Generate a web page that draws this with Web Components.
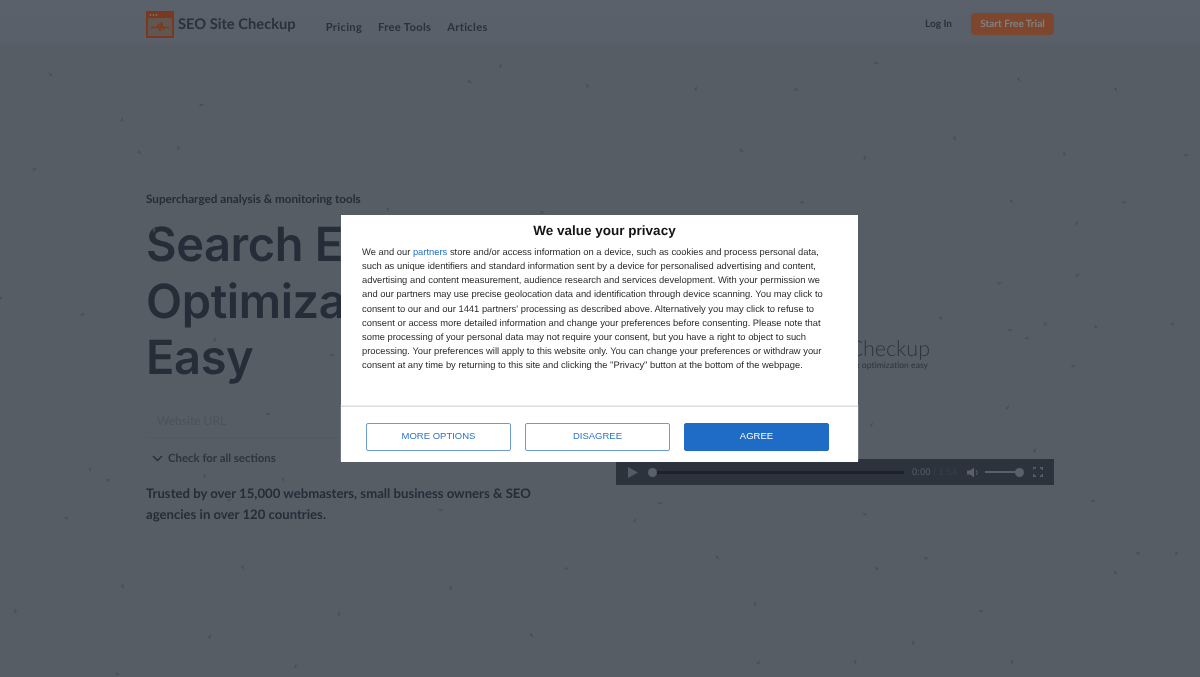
<!DOCTYPE html>
<html lang="en">
<head>
<meta charset="utf-8">
<title>SEO Site Checkup</title>
<style>
html, body {
  margin: 0;
  height: 100%;
  overflow: hidden;
  background: #acbaca;
  text-rendering: geometricPrecision;
}
</style>
</head>
<body>
<speck-field></speck-field>
<site-nav></site-nav>
<hero-section>
  <hero-copy slot="copy"></hero-copy>
  <video-player slot="media"></video-player>
</hero-section>
<consent-dialog></consent-dialog>

<template id="navTemplate">
<style>
:host {
  display: block;
  height: 48px;
  background: linear-gradient(#b5c2d6, #b3c0d3 85%, #acbaca);
  font-family: Lato, "Liberation Sans", sans-serif;
  color: #55627a;
  filter: blur(.35px);
}
.inner {
  box-sizing: border-box;
  width: 908px;
  height: 100%;
  margin: 0 auto;
  display: flex;
  align-items: center;
}
.brand {
  display: flex;
  align-items: center;
  gap: 4px;
  font-size: 14.7px;
  font-weight: 700;
  margin-right: 30px;
}
.brand svg { display: block; }
nav {
  display: flex;
  gap: 16px;
  font-size: 11.2px;
  font-weight: 700;
  letter-spacing: .3px;
  padding-top: 6px;
}
.right {
  margin-left: auto;
  display: flex;
  align-items: center;
  gap: 19px;
  font-size: 10px;
  font-weight: 700;
}
.trial {
  box-sizing: border-box;
  width: 83px;
  height: 22px;
  line-height: 22px;
  text-align: center;
  border-radius: 4px;
  background: #ff8c5c;
  color: #fff;
}
</style>
<div class="inner">
  <div class="brand">
    <svg width="28" height="27" viewBox="0 0 28 27" fill="none">
      <rect x="1" y="1" width="26" height="25" fill="#c4aca2" stroke="#f4733c" stroke-width="2"/>
      <rect x="1" y="1" width="26" height="6" fill="#f4733c"/>
      <circle cx="4.5" cy="4" r=".9" fill="#fbd9c8"/><circle cx="7.5" cy="4" r=".9" fill="#fbd9c8"/><circle cx="10.5" cy="4" r=".9" fill="#fbd9c8"/>
      <path d="M5 16.5h6l1.5-3 1.5 6.5 1.5-9 1.5 7 1-1.5h5" stroke="#f4733c" stroke-width="1.4"/>
    </svg>
    <span>SEO Site Checkup</span>
  </div>
  <nav><span>Pricing</span><span>Free Tools</span><span>Articles</span></nav>
  <div class="right"><span>Log In</span><span class="trial">Start Free Trial</span></div>
</div>
</template>

<template id="heroTemplate">
<style>
:host {
  display: block;
  width: 908px;
  margin: 0 auto;
}
.grid {
  display: grid;
  grid-template-columns: 1fr 438px;
  column-gap: 40px;
  padding-top: 143px;
}
.media { padding-top: 47px; }
</style>
<div class="grid">
  <div><slot name="copy"></slot></div>
  <div class="media"><slot name="media"></slot></div>
</div>
</template>

<template id="copyTemplate">
<style>
:host {
  display: block;
  font-family: Lato, "Liberation Sans", sans-serif;
  color: #4c5a72;
  filter: blur(.35px);
}
.eyebrow {
  font-size: 11.7px;
  font-weight: 700;
  line-height: 16px;
}
h1 {
  margin: 10px 0 0;
  font-family: Inter, Lato, sans-serif;
  font-size: 47px;
  line-height: 56.5px;
  font-weight: 600;
  letter-spacing: -.4px;
  white-space: nowrap;
}
.url {
  box-sizing: border-box;
  height: 33px;
  margin-top: 18px;
  padding: 0 11px;
  display: flex;
  align-items: center;
  border-bottom: 1px solid #a3b2c6;
  font-size: 12px;
  color: #97a4b5;
}
.sections {
  display: flex;
  align-items: center;
  gap: 5px;
  margin: 13px 0 0 6px;
  height: 16px;
  font-size: 11.4px;
  font-weight: 700;
  color: #5d6a80;
}
p {
  margin: 16px 0 0;
  font-size: 13.15px;
  line-height: 21px;
  font-weight: 700;
}
</style>
<div class="eyebrow">Supercharged analysis &amp; monitoring tools</div>
<h1>Search Engine<br>Optimization Made<br>Easy</h1>
<div class="url">Website URL</div>
<div class="sections">
  <svg width="11" height="7" viewBox="0 0 11 7" fill="none"><path d="M1 1l4.5 4.5L10 1" stroke="#4c5a72" stroke-width="1.3"/></svg>
  <span>Check for all sections</span>
</div>
<p>Trusted by over 15,000 webmasters, small business owners &amp; SEO<br>agencies in over 120 countries.</p>
</template>

<template id="videoTemplate">
<style>
:host {
  display: block;
  font-family: Lato, "Liberation Sans", sans-serif;
  filter: blur(.35px);
}
.poster {
  box-sizing: border-box;
  height: 221px;
  display: flex;
  flex-direction: column;
  align-items: flex-end;
  padding: 98px 124px 0 0;
  color: #5a6a82;
}
.poster b {
  font-size: 21.5px;
  line-height: 24px;
  font-weight: 300;
}
.poster small {
  font-size: 8.6px;
  line-height: 10px;
  padding-right: 2px;
}
.bar {
  height: 26px;
  background: #5a6678;
  display: flex;
  align-items: center;
  padding: 0 11px 0 12px;
  color: #a9b5c5;
}
.track {
  flex: 1;
  height: 3px;
  background: #3a4455;
  margin-left: 6px;
  position: relative;
}
.knob {
  position: absolute;
  left: -5px;
  top: -3px;
  width: 9px;
  height: 9px;
  border-radius: 50%;
  background: #b5c0cf;
}
.time {
  font-family: "Liberation Sans", sans-serif;
  font-size: 9.5px;
  margin: 0 10px 0 8px;
  white-space: nowrap;
}
.time span { color: #6f7c8d; }
.vol {
  width: 37px;
  height: 2px;
  background: #b5c0cf;
  margin: 0 11px 0 6px;
  position: relative;
}
.vol i {
  position: absolute;
  right: -2px;
  top: -3.5px;
  width: 9px;
  height: 9px;
  border-radius: 50%;
  background: #b5c0cf;
}
svg { display: block; flex: none; }
</style>
<div class="poster"><b>SEO Site Checkup</b><small>Making website optimization easy</small></div>
<div class="bar">
  <svg width="10" height="11" viewBox="0 0 10 11"><path d="M0 0l10 5.5L0 11z" fill="#a9b5c5"/></svg>
  <span style="width:9px"></span>
  <div class="track"><div class="knob"></div></div>
  <div class="time">0:00 <span>/ 1:54</span></div>
  <svg width="12" height="11" viewBox="0 0 12 11" fill="none"><path d="M0 3.5h3L7 .5v10l-4-3H0z" fill="#b5c0cf"/><path d="M9 3a3.5 3.5 0 010 5" stroke="#b5c0cf"/></svg>
  <div class="vol"><i></i></div>
  <svg width="10" height="10" viewBox="0 0 10 10" fill="none" stroke="#b5c0cf" stroke-width="1.4"><path d="M0 3V.7h3M7 .7h2.3V3M9.3 7v2.3H7M3 9.3H.7V7"/></svg>
</div>
</template>

<template id="consentTemplate">
<style>
:host {
  position: fixed;
  inset: 0;
  z-index: 2;
  display: flex;
  align-items: center;
  justify-content: center;
  padding-right: 1px;
  background: rgba(0, 0, 0, .5);
  font-family: "Liberation Sans", Arial, sans-serif;
}
.box {
  box-sizing: border-box;
  width: 517px;
  height: 247px;
  background: #fff;
  display: flex;
  flex-direction: column;
  filter: blur(.25px);
}
h2 {
  margin: 0;
  padding: 8px 0 0 10px;
  text-align: center;
  font-size: 13.5px;
  line-height: 16px;
  font-weight: 700;
  color: #141414;
}
.text {
  flex: 1;
  padding: 6px 21px 0;
  font-size: 9.4px;
  line-height: 14.15px;
  color: #2b2b2b;
  white-space: nowrap;
}
a { color: #1f6fc6; text-decoration: none; }
.actions {
  height: 56px;
  border-top: 1px solid #dcdcdc;
  box-shadow: 0 -1px 1px #efefef;
  display: flex;
  gap: 14px;
  padding: 16px 0 0 25px;
  box-sizing: border-box;
}
button {
  box-sizing: border-box;
  width: 145px;
  height: 28px;
  border: 1px solid #6d9ad2;
  border-radius: 2px;
  background: #fff;
  color: #2a74c9;
  font: 9.5px "Liberation Sans", Arial, sans-serif;
  padding: 0 0 3px;
}
button.primary {
  background: #1e6cc5;
  border-color: #1e6cc5;
  color: #fff;
}
</style>
<div class="box" role="dialog">
  <h2>We value your privacy</h2>
  <div class="text">We and our <a href="#">partners</a> store and/or access information on a device, such as cookies and process personal data,<br>such as unique identifiers and standard information sent by a device for personalised advertising and content,<br>advertising and content measurement, audience research and services development. With your permission we<br>and our partners may use precise geolocation data and identification through device scanning. You may click to<br>consent to our and our 1441 partners' processing as described above. Alternatively you may click to refuse to<br>consent or access more detailed information and change your preferences before consenting. Please note that<br>some processing of your personal data may not require your consent, but you have a right to object to such<br>processing. Your preferences will apply to this website only. You can change your preferences or withdraw your<br>consent at any time by returning to this site and clicking the "Privacy" button at the bottom of the webpage.</div>
  <div class="actions">
    <button>MORE OPTIONS</button>
    <button>DISAGREE</button>
    <button class="primary">AGREE</button>
  </div>
</div>
</template>

<script>
// Plain helper so each element does the same shadow setup
class TemplateElement extends HTMLElement {
  constructor(templateId) {
    super();
    this.root = this.attachShadow({ mode: 'open' });
    this.root.appendChild(document.getElementById(templateId).content.cloneNode(true));
  }
}

class SiteNav extends TemplateElement {
  constructor() { super('navTemplate'); }
}

class HeroSection extends TemplateElement {
  constructor() { super('heroTemplate'); }
}

class HeroCopy extends TemplateElement {
  constructor() { super('copyTemplate'); }
}

class VideoPlayer extends TemplateElement {
  constructor() { super('videoTemplate'); }
}

class ConsentDialog extends TemplateElement {
  constructor() { super('consentTemplate'); }
}

// Specks read off the reference, the rest are filled in with a fixed seed
const KNOWN_SPECKS = [
  [243, 568], [123, 587], [451, 587], [567, 569], [15, 612], [339, 613], [210, 636], [532, 636], [295, 667], [118, 674],
  [877, 63], [795, 90], [1019, 80], [1116, 90], [742, 151], [865, 157], [955, 139], [1064, 153], [1185, 155], [803, 202], [1012, 202], [1123, 202],
  [1000, 283], [1045, 325], [941, 319], [1011, 330], [1026, 338], [1008, 407], [872, 424], [1035, 450]
];

class SpeckField extends HTMLElement {
  constructor() {
    super();
    this.root = this.attachShadow({ mode: 'open' });
    let seed = 41;
    const rnd = () => (seed = (seed * 16807) % 2147483647) / 2147483647;
    const points = KNOWN_SPECKS.slice();
    while (points.length < 85) {
      const x = Math.round(rnd() * 1200);
      const y = Math.round(55 + rnd() * 620);
      const taken = (x < 600 && y > 530) || (x > 700 && y < 210) || (x > 860 && x < 1054 && y < 460);
      if (!taken) {
        points.push([x, y]);
      }
    }
    const marks = points.map(([x, y]) =>
      `<path transform="translate(${x} ${y}) rotate(${(rnd() * 360).toFixed(0)})" d="M-2.4 -1.4L2.4 0L-2.4 1.4Z"/>`).join('');
    this.root.innerHTML = `<style>
      :host { position: absolute; inset: 0; z-index: 1; pointer-events: none; }
      svg { display: block; filter: blur(.4px); }
    </style>
    <svg width="1200" height="677" fill="#929eac">${marks}</svg>`;
  }
}

customElements.define('site-nav', SiteNav);
customElements.define('hero-section', HeroSection);
customElements.define('hero-copy', HeroCopy);
customElements.define('video-player', VideoPlayer);
customElements.define('consent-dialog', ConsentDialog);
customElements.define('speck-field', SpeckField);
</script>
</body>
</html>
